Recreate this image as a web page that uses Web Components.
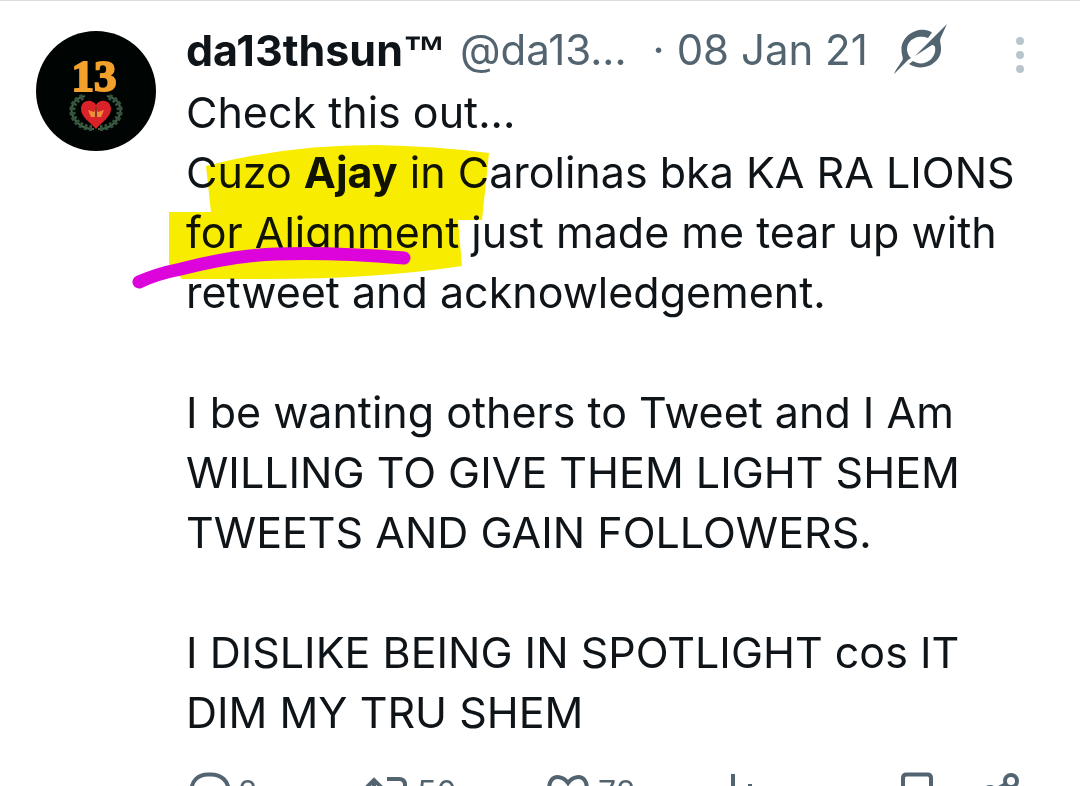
<!DOCTYPE html>
<html lang="en">
<head>
<meta charset="utf-8">
<meta name="viewport" content="width=device-width, initial-scale=1">
<title>Post</title>
<style>
	body {
		margin: 0;
		height: 100vh;
		overflow: hidden;
		background: #fff;
		color: #0f1419;
		font-family: Inter, Roboto, "Liberation Sans", sans-serif;
		font-size: 43px;
		line-height: 60px;
	}
</style>
</head>
<body>
<post-card>
	<post-avatar slot="avatar"></post-avatar>
	<post-header slot="header" name="da13thsun" mark="™" handle="@da13..." date="08 Jan 21"></post-header>
	<post-text>Check this out...<br>Cuzo <b>Ajay</b> in Carolinas bka KA RA LIONS<br>for Alignment just made me tear up with<br>retweet and acknowledgement.<br><br>I be wanting others to Tweet and I Am<br>WILLING TO GIVE THEM LIGHT SHEM<br>TWEETS AND GAIN FOLLOWERS.<br><br>I DISLIKE BEING IN SPOTLIGHT cos IT<br>DIM MY TRU SHEM</post-text>
	<post-actions></post-actions>
</post-card>

<script>
const icons = {
	reply: '<path d="M25 3.500h-3C12 3.500 5.500 10 5.500 19s6.500 15 16 15v9C33 38 42.500 30 42.500 19c0-9-7.500-15.500-17.500-15.500z"/>',
	repost: '<path d="m1 17 8-8 8 8M9 10v22c0 3 2 5 5 5h8M22 8h12c4 0 6 2 6 6v20M32 29l8 8 8-8"/>',
	like: '<path d="M22 12C17 5 9 4.500 5.500 9c-4 5-2 11 1 16 3 5 9 10 15.500 14 6.500-4 12.500-9 15.500-14 3-5 5-11 1-16C35 4.500 27 5 22 12z"/>',
	views: '<path d="M6 40V24M21 40V3M38 40V13"/>',
	bookmark: '<path d="M7 41V7c0-2 1-3.500 3.500-3.500h21C34 3.500 35 5 35 7v34L21 31z"/>',
	share: '<circle cx="29" cy="10" r="6"/><circle cx="8" cy="22" r="6"/><circle cx="29" cy="34" r="6"/><path d="m13 19 11-6M13 25l11 6"/>'
};

customElements.define('post-card', class extends HTMLElement {
	constructor() {
		super();
		this.attachShadow({ mode: 'open' }).innerHTML = `
			<style>
				:host {
					display: block;
					border-top: 1px solid #dcdcdc;
				}

				article {
					display: grid;
					grid-template-columns: 120px minmax(0, 1fr);
					column-gap: 30px;
					padding: 20px 48px 0 36px;
				}

				.avatar {
					padding-top: 10px;
				}
			</style>
			<article>
				<div class="avatar"><slot name="avatar"></slot></div>
				<div><slot name="header"></slot><slot></slot></div>
			</article>
		`;
	}
});

customElements.define('post-avatar', class extends HTMLElement {
	constructor() {
		super();
		this.attachShadow({ mode: 'open' }).innerHTML = `
			<style>
				:host {
					display: block;
					width: 120px;
					height: 120px;
					border-radius: 50%;
					background: #000504;
					overflow: hidden;
				}

				svg {
					display: block;
				}

				text {
					font: bold 45px "Liberation Serif", serif;
					fill: #f3a02c;
					stroke: #f3a02c;
					stroke-width: 2;
				}
			</style>
			<svg width="120" height="120" viewBox="0 0 120 120" role="img" aria-label="da13thsun">
				<text x="58" y="60" text-anchor="middle">13</text>
				<g fill="none" stroke="#43664a" stroke-width="2">
					<path d="M49 65C34 68 31 83 43 93c4 4 10 5 15 5M71 65c15 3 18 18 6 28-4 4-10 5-15 5"/>
					<path stroke-width="6" stroke-dasharray="3 2" stroke="#36533d" d="M47 66C34 70 33 85 43 93c3 2 8 4 13 4M73 66c13 4 14 19 4 27-3 2-8 4-13 4"/>
				</g>
				<path fill="#da2229" d="M60 98C54 91 45 86 45 78c0-9 11-11 15-4 4-7 15-5 15 4 0 8-9 13-15 20z"/>
				<path fill="#ed8f3a" d="m52 79 6 2 2-4 2 4 6-2-3 7H55z"/>
				<path fill="#8b3422" d="M59 76h2v10h-2z"/>
			</svg>
		`;
	}
});

customElements.define('post-header', class extends HTMLElement {
	constructor() {
		super();
		this.attachShadow({ mode: 'open' }).innerHTML = `
			<style>
				:host {
					display: flex;
					align-items: center;
					height: 58px;
					margin-bottom: 3px;
					color: #536471;
					font-size: 42px;
					white-space: nowrap;
				}

				a {
					color: inherit;
					text-decoration: none;
				}

				.name {
					margin-right: 14px;
					color: #0f1419;
					font-size: 43px;
					font-weight: 700;
				}

				.mark {
					font-family: "Liberation Sans", sans-serif;
					line-height: 1;
				}

				.dot {
					margin: 0 12px 0 26px;
				}

				button {
					display: flex;
					padding: 0;
					border: 0;
					background: none;
					color: inherit;
				}

				.grok {
					margin-left: 26px;
				}

				.more {
					margin-left: auto;
					color: #b9c5cd;
				}
			</style>
			<a class="name" href="#"><span class="text"></span><span class="mark"></span></a>
			<a class="handle" href="#"></a>
			<span class="dot">·</span>
			<time></time>
			<button class="grok" aria-label="Explain this post">
				<svg width="54" height="54" viewBox="0 0 54 54" fill="currentColor">
					<path d="M38 9.500C27 2 7 11 7.500 27c.2 6 2 8 1 10-1.500 3-6 8-8.500 14l14-14 3-2C10 28 13 18 21 15c5-2 9-1 13 0z"/>
					<path d="M53 1 21 33l17-11c2 0 4 1 3 7-2 9-13 15-22 9l-4 3c14 9 33-1 32-16 0-5-2-7 0-11z"/>
				</svg>
			</button>
			<button class="more" aria-label="More">
				<svg width="24" height="50" viewBox="0 0 24 50" fill="currentColor">
					<circle cx="12" cy="16" r="4"/><circle cx="12" cy="30" r="4"/><circle cx="12" cy="44" r="4"/>
				</svg>
			</button>
		`;
	}

	connectedCallback() {
		this.shadowRoot.querySelector('.text').textContent = this.getAttribute('name');
		this.shadowRoot.querySelector('.mark').textContent = this.getAttribute('mark');
		this.shadowRoot.querySelector('.handle').textContent = this.getAttribute('handle');
		this.shadowRoot.querySelector('time').textContent = this.getAttribute('date');
	}
});

customElements.define('post-text', class extends HTMLElement {
	constructor() {
		super();
		this.attachShadow({ mode: 'open' }).innerHTML = `
			<style>
				:host {
					display: block;
					position: relative;
					white-space: nowrap;
				}

				/* marker strokes drawn over the text */
				svg {
					position: absolute;
					left: -60px;
					top: 0;
					pointer-events: none;
				}

				.marker {
					mix-blend-mode: multiply;
				}
			</style>
			<slot></slot>
			<svg class="marker" width="400" height="220" viewBox="0 0 400 220" aria-hidden="true">
				<path fill="#f8ec00" d="M80 84Q160 63 249 63Q310 64 363 71L356 138H332L336 184Q250 197 140 197L56 197L43 182V130H85z"/>
			</svg>
			<svg width="400" height="220" viewBox="0 0 400 220" aria-hidden="true">
				<path fill="none" stroke="#dc04da" stroke-width="13" stroke-linecap="round" stroke-linejoin="round" d="M13 200Q30 192 55 187Q110 173 150 172Q205 170 278 176"/>
			</svg>
		`;
	}
});

customElements.define('post-actions', class extends HTMLElement {
	constructor() {
		super();
		this.attachShadow({ mode: 'open' }).innerHTML = `
			<style>
				:host {
					display: grid;
					grid-template-columns: 179fr 181fr 166fr 184fr 86fr 50fr;
					padding-top: 29px;
					color: #536471;
				}

				button {
					display: flex;
					align-items: center;
					gap: 8px;
					padding: 0;
					border: 0;
					background: none;
					color: inherit;
					font: 32px/44px Inter, Roboto, sans-serif;
				}

				svg {
					flex: none;
					overflow: visible;
				}
			</style>
			${this.button('reply', 'Reply', '2')}
			${this.button('repost', 'Repost', '50')}
			${this.button('like', 'Like', '72')}
			${this.button('views', 'Views')}
			${this.button('bookmark', 'Bookmark')}
			${this.button('share', 'Share')}
		`;
	}

	button(icon, label, count = '') {
		return `
			<button aria-label="${label}">
				<svg width="44" height="44" viewBox="0 0 44 44" fill="none" stroke="currentColor" stroke-width="4">${icons[icon]}</svg>
				${count && `<span>${count}</span>`}
			</button>
		`;
	}
});
</script>
</body>
</html>
